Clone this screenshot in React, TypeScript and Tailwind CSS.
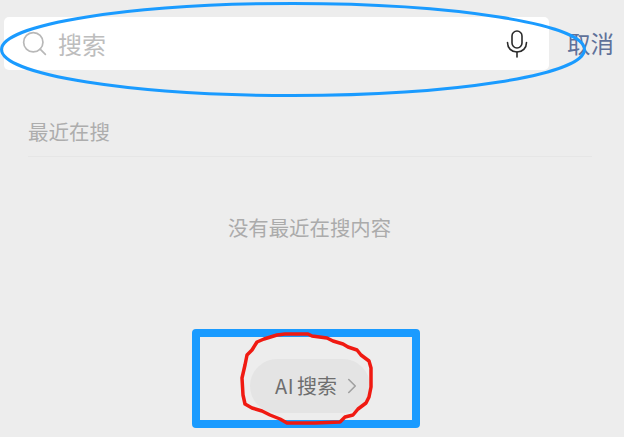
import { Search, ChevronRight } from 'lucide-react';

const FONT = "font-['Noto_Sans_CJK_SC','Liberation_Sans',sans-serif]";

export default function App() {
  return (
    <div className={`relative flex h-[437px] w-[624px] flex-col overflow-hidden bg-[#ededed] ${FONT}`}>
      {/* search row */}
      <div className="flex items-center pl-[4px] pt-[17px]">
        <div className="flex h-[53px] w-[545px] items-center rounded-[5px] bg-white pl-[16px] pr-[21px]">
          <Search size={29} strokeWidth={1.4} className="text-[#b8b8b8]" />
          <span className="ml-[9px] text-[24px] leading-none text-[#bdbdbd]">搜索</span>
          <svg className="ml-auto h-[28px] w-[22px]" viewBox="0 0 22 28" fill="none" stroke="#2b2b2b" strokeWidth="1.6" strokeLinecap="round">
            <rect x="6" y="1" width="10" height="17" rx="5" />
            <path d="M1.5 12.5c0 5.5 4 9.5 9.5 9.5s9.5-4 9.5-9.5" />
            <path d="M11 22v5" />
          </svg>
        </div>
        <span className="ml-[18px] text-[23.5px] leading-none text-[#5f7199]">取消</span>
      </div>

      {/* recent */}
      <div className="mx-[28px] mt-[49px] w-[564px] border-b border-[#e6e6e6] pb-[12px]">
        <span className="block text-[20.5px] leading-[25px] text-[#adadad]">最近在搜</span>
      </div>
      <div className="mt-[57px] pr-[5px] text-center text-[20.4px] leading-[26px] text-[#ababab]">没有最近在搜内容</div>

      {/* ai button */}
      <div className="mt-auto flex justify-center pb-[9px] pr-[12px]">
        <div className="flex h-[99px] w-[228px] items-center justify-center rounded-[4px] border-[8px] border-[#1a9bff]">
          <div className="ml-[8px] mt-[15px] flex h-[54px] w-[120px] shrink-0 items-center rounded-full bg-[#e4e4e4] pl-[25px]">
            <span className="text-[20px] leading-none tracking-[0.5px] text-[#6e6e6e]">AI</span>
            <span className="ml-[3px] text-[20px] leading-none text-[#6e6e6e]">搜索</span>
            <ChevronRight size={26} strokeWidth={1.5} className="ml-[2px] shrink-0 text-[#a0a0a0]" />
          </div>
        </div>
      </div>

      {/* hand-drawn annotations on top */}
      <svg className="pointer-events-none absolute inset-0" width="624" height="437" fill="none">
        <ellipse cx="293" cy="49.5" rx="291.5" ry="46" stroke="#1a9bff" strokeWidth="3" />
        <path
          d="M277 335L285 334L308 334L312 336L327 338L333 341L343 344L348 347L357 350L361 355L369 361L371 368L371 387L369 397L366 403L358 409L353 415L345 417L340 422L315 423L287 423L280 419L270 415L262 411L252 408L245 404L243 395L242 378L245 365L247 355L252 350L257 342L264 339Z"
          stroke="#f01a12"
          strokeWidth="3.5"
          strokeLinejoin="round"
        />
      </svg>
    </div>
  );
}
